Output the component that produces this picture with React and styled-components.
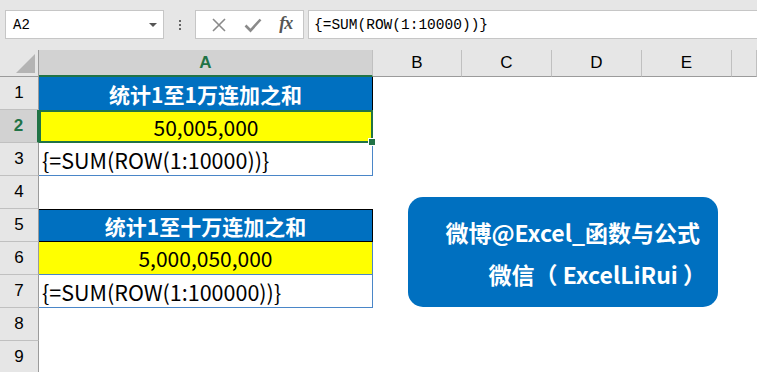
import React from 'react';
import styled, { createGlobalStyle, css } from 'styled-components';

const GlobalStyle = createGlobalStyle`
  html, body {
    margin: 0;
    padding: 0;
    background: #ffffff;
    overflow: hidden;
  }
  body {
    font-family: "Liberation Sans", Arial, sans-serif;
  }
`;

const CJK = `"Noto Sans CJK SC", "Noto Sans", sans-serif`;
const GREEN = '#217346';
const BLUE = '#0070c0';

const Page = styled.div`
  width: 757px;
  height: 372px;
  overflow: hidden;
  background: #ffffff;
`;

const Toolbar = styled.div`
  height: 50px;
  box-sizing: border-box;
  background: #e6e6e6;
  display: flex;
  align-items: flex-start;
  padding: 10px 0 0 5px;
`;

const NameBox = styled.div`
  width: 159px;
  height: 29px;
  box-sizing: border-box;
  background: #fff;
  border: 1px solid #c6c6c6;
  display: flex;
  align-items: center;
  justify-content: space-between;
  padding: 0 6px 0 7px;
  font-family: "Liberation Mono", monospace;
  font-size: 14px;
  color: #000;
`;

const Caret = styled.span`
  width: 0;
  height: 0;
  border-left: 4px solid transparent;
  border-right: 4px solid transparent;
  border-top: 4px solid #555;
`;

const Dots = styled.div`
  width: 31px;
  height: 29px;
  display: flex;
  flex-direction: column;
  align-items: center;
  justify-content: center;
  gap: 2px;
  span {
    width: 2px;
    height: 2px;
    background: #666;
  }
`;

const IconBox = styled.div`
  width: 109px;
  height: 29px;
  box-sizing: border-box;
  background: #fff;
  border: 1px solid #c6c6c6;
  display: flex;
  align-items: center;
  justify-content: space-around;
  padding: 0 2px 0 6px;
  margin-right: 4px;
`;

const Fx = styled.span`
  font-family: "Liberation Serif", serif;
  font-style: italic;
  font-weight: 700;
  font-size: 18px;
  color: #555;
  letter-spacing: -1px;
  margin-top: -2px;
`;

const FormulaBox = styled.div`
  flex: 1;
  height: 29px;
  box-sizing: border-box;
  background: #fff;
  border: 1px solid #c6c6c6;
  border-right: none;
  display: flex;
  align-items: center;
  padding-left: 5px;
  font-family: "Liberation Mono", monospace;
  font-size: 14.5px;
  color: #000;
`;

const Sheet = styled.div`
  position: relative;
  display: grid;
  grid-template-columns: 39px 334px 89px 90px 90px 90px 1fr;
  grid-template-rows: 27px repeat(9, 33px);
`;

const Corner = styled.div`
  background: #e6e6e6;
  border-right: 1px solid #9b9b9b;
  border-bottom: 1px solid #9b9b9b;
  box-sizing: border-box;
  position: relative;
  &::after {
    content: '';
    position: absolute;
    right: 3px;
    bottom: 3px;
    width: 0;
    height: 0;
    border-left: 19px solid transparent;
    border-bottom: 19px solid #b4b4b4;
  }
`;

const ColHead = styled.div`
  box-sizing: border-box;
  background: ${p => (p.$active ? '#d2d2d2' : '#e6e6e6')};
  border-right: 1px solid #c0c0c0;
  border-bottom: ${p => (p.$active ? `2px solid ${GREEN}` : '1px solid #9b9b9b')};
  display: flex;
  align-items: center;
  justify-content: center;
  font-size: 17px;
  font-weight: ${p => (p.$active ? 700 : 400)};
  color: ${p => (p.$active ? GREEN : '#000')};
  padding-top: ${p => (p.$active ? '1px' : '0')};
`;

const RowHead = styled.div`
  box-sizing: border-box;
  background: ${p => (p.$active ? '#d2d2d2' : '#e6e6e6')};
  border-right: ${p => (p.$active ? `2px solid ${GREEN}` : '1px solid #9b9b9b')};
  border-bottom: 1px solid #c0c0c0;
  display: flex;
  align-items: center;
  justify-content: center;
  font-size: 17px;
  font-weight: ${p => (p.$active ? 700 : 400)};
  color: ${p => (p.$active ? GREEN : '#000')};
`;

const cellKinds = {
  title: css`
    background: ${BLUE};
    color: #fff;
    font-weight: 700;
    font-size: 21px;
    justify-content: center;
  `,
  value: css`
    background: #ffff00;
    color: #000;
    font-size: 21px;
    justify-content: center;
  `,
  formula: css`
    background: #fff;
    color: #000;
    font-size: 21.5px;
    justify-content: flex-start;
    padding-left: 3px;
  `,
  empty: css`
    background: #fff;
  `,
};

const Cell = styled.div`
  position: relative;
  box-sizing: border-box;
  display: flex;
  align-items: center;
  font-family: ${CJK};
  white-space: nowrap;
  ${p => cellKinds[p.$kind || 'empty']}
  ${p => p.$edge === 'black' && css`
    border: 1px solid #000;
    border-left: none;
  `}
  ${p => p.$edge === 'blackRight' && css`
    border-right: 1px solid #000;
  `}
  ${p => p.$edge === 'blue' && css`
    border-right: 1px solid #4a86c8;
    border-bottom: 1px solid #4a86c8;
  `}
  ${p => p.$selected && css`
    border: 2px solid ${GREEN};
  `}
`;

const FillHandle = styled.span`
  position: absolute;
  right: -5px;
  bottom: -5px;
  width: 6px;
  height: 6px;
  background: ${GREEN};
  border: 1px solid #fff;
  z-index: 2;
`;

const Badge = styled.div`
  position: absolute;
  left: 408px;
  top: 147px;
  width: 310px;
  height: 110px;
  box-sizing: border-box;
  background: ${BLUE};
  border-radius: 15px;
  display: flex;
  flex-direction: column;
  align-items: flex-end;
  justify-content: center;
  gap: 12px;
  padding: 2px 18px 0 0;
  font-family: ${CJK};
  font-weight: 700;
  font-size: 23px;
  color: #fff;
  line-height: 30px;
  white-space: nowrap;
`;

const BadgeLine = styled.div`
  margin-right: ${p => p.$shift || 0}px;
`;

const XIcon = () => (
  <svg width="16" height="16" viewBox="0 0 16 16">
    <path d="M2 2 L14 14 M14 2 L2 14" stroke="#8a8a8a" strokeWidth="1.6" fill="none" />
  </svg>
);

const CheckIcon = () => (
  <svg width="18" height="16" viewBox="0 0 18 16">
    <path d="M1.5 8.5 L6.5 13.5 L16.5 2.5" stroke="#8a8a8a" strokeWidth="2.6" fill="none" />
  </svg>
);

const columns = ['A', 'B', 'C', 'D', 'E', ''];

const rows = [
  { kind: 'title', text: '统计1至1万连加之和', edge: 'blackRight' },
  { kind: 'value', text: '50,005,000', selected: true },
  { kind: 'formula', text: '{=SUM(ROW(1:10000))}', edge: 'blue' },
  { kind: 'empty' },
  { kind: 'title', text: '统计1至十万连加之和', edge: 'black' },
  { kind: 'value', text: '5,000,050,000', edge: 'blue' },
  { kind: 'formula', text: '{=SUM(ROW(1:100000))}', edge: 'blue' },
  { kind: 'empty' },
  { kind: 'empty' },
];

const App = () => (
  <Page>
    <GlobalStyle />
    <Toolbar>
      <NameBox>
        A2
        <Caret />
      </NameBox>
      <Dots><span /><span /><span /></Dots>
      <IconBox>
        <XIcon />
        <CheckIcon />
        <Fx>fx</Fx>
      </IconBox>
      <FormulaBox>{'{=SUM(ROW(1:10000))}'}</FormulaBox>
    </Toolbar>
    <Sheet>
      <Corner />
      {columns.map((c, i) => (
        <ColHead key={i} $active={c === 'A'}>{c}</ColHead>
      ))}
      {rows.map((r, i) => (
        <React.Fragment key={i}>
          <RowHead $active={i === 1}>{i + 1}</RowHead>
          <Cell $kind={r.kind} $edge={r.edge} $selected={r.selected}>
            {r.text}
            {r.selected && <FillHandle />}
          </Cell>
          {columns.slice(1).map((c, j) => (
            <Cell key={j} />
          ))}
        </React.Fragment>
      ))}
      <Badge>
        <BadgeLine>微博@Excel_函数与公式</BadgeLine>
        <BadgeLine $shift={-6}>微信（ ExcelLiRui ）</BadgeLine>
      </Badge>
    </Sheet>
  </Page>
);

export default App;
